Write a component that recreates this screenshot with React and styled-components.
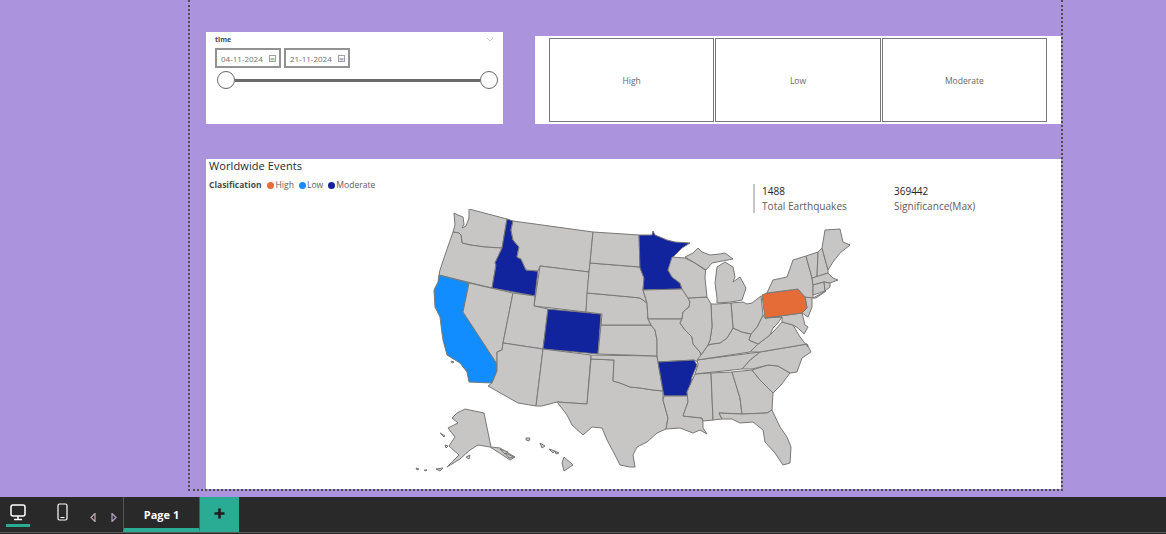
import styled, { createGlobalStyle } from "styled-components";

const Global = createGlobalStyle`
  html, body { margin: 0; padding: 0; background: #ab94dd; }
  body { font-family: "Open Sans", "Noto Sans", sans-serif; overflow: hidden; }
`;

const Page = styled.div`
  width: 1166px;
  height: 534px;
  display: flex;
  flex-direction: column;
`;

const Stage = styled.main`
  height: 497px;
  padding-left: 188px;
  box-sizing: border-box;
  background: #ab94dd;
`;

const Canvas = styled.div`
  width: 875px;
  height: 491px;
  box-sizing: border-box;
  padding: 32px 0 0 16px;
  border: 2px dotted #4d4d4d;
  border-top: none;
`;

const TopRow = styled.div`
  display: flex;
  align-items: flex-end;
  gap: 32px;
  height: 92px;
`;

const Slicer = styled.section`
  width: 297px;
  height: 92px;
  box-sizing: border-box;
  background: #fff;
  padding: 1px 9px 0 9px;
`;

const SlicerHead = styled.div`
  display: flex;
  justify-content: space-between;
  align-items: center;
  height: 13px;
  font-size: 7px;
  font-weight: 700;
  color: #3f4a63;
`;

const DateRow = styled.div`
  display: flex;
  gap: 3px;
  margin-top: 2px;
`;

const DateBox = styled.div`
  width: 66px;
  height: 20px;
  box-sizing: border-box;
  border: 2px solid #929292;
  display: flex;
  align-items: center;
  justify-content: space-between;
  padding: 0 3px 0 4px;
  font-size: 8px;
  color: #707070;
`;

const Track = styled.div`
  display: flex;
  align-items: center;
  margin: 3px -4px 0 2px;
`;

const Handle = styled.span`
  width: 18px;
  height: 18px;
  flex: none;
  box-sizing: border-box;
  border: 1.5px solid #666;
  border-radius: 50%;
  background: #fff;
`;

const Line = styled.span`
  flex: 1;
  height: 3px;
  background: #6a6a6a;
`;

const ButtonPanel = styled.section`
  width: 526px;
  height: 88px;
  box-sizing: border-box;
  background: #fff;
  padding: 2px 14px;
  display: grid;
  grid-template-columns: repeat(3, 1fr);
  gap: 1px;
`;

const LevelButton = styled.div`
  border: 1px solid #777;
  display: flex;
  align-items: center;
  justify-content: center;
  font-size: 8.5px;
  color: #666;
`;

const MapCard = styled.section`
  width: 855px;
  height: 330px;
  margin-top: 35px;
  background: #fff;
`;

const MapHeader = styled.div`
  height: 50px;
  display: flex;
  justify-content: space-between;
`;

const TitleBlock = styled.div`
  padding: 0 0 0 3px;
`;

const Title = styled.h2`
  margin: 0;
  font-size: 11px;
  line-height: 14px;
  font-weight: 400;
  color: #252a33;
  letter-spacing: 0.1px;
`;

const Legend = styled.div`
  display: flex;
  align-items: center;
  gap: 3px;
  margin-top: 6px;
  font-size: 8.6px;
  line-height: 12px;
  color: #605e5c;
`;

const LegendTitle = styled.span`
  font-size: 8.5px;
  font-weight: 700;
  margin-right: 3px;
  color: #4a4a4a;
`;

const LegendItem = styled.span`
  display: flex;
  align-items: center;
  gap: 1px;
  margin-right: 2px;
  &::before {
    content: "";
    width: 7px;
    height: 7px;
    border-radius: 50%;
    background: ${(p) => p.$color};
  }
`;

const Kpis = styled.div`
  display: grid;
  grid-template-columns: 132px 124px;
  width: 308px;
  height: 29px;
  margin-top: 25px;
  box-sizing: border-box;
  border-left: 2px solid #c8c6c4;
  padding-left: 7px;
  font-size: 10px;
  line-height: 14.5px;
`;

const KpiValue = styled.div`
  color: #252423;
`;

const KpiLabel = styled.div`
  color: #605e5c;
  font-size: 10.1px;
`;

const MapSvg = styled.svg`
  display: block;
  width: 855px;
  height: 280px;
`;

const Taskbar = styled.nav`
  height: 36px;
  box-sizing: border-box;
  background: #292929;
  border-bottom: 1px solid #5a5a5a;
  box-shadow: 0 1px 0 #292929;
  display: flex;
  align-items: stretch;
`;

const ViewButton = styled.div`
  width: ${(p) => p.$w}px;
  margin-left: ${(p) => p.$ml || 0}px;
  display: flex;
  align-items: center;
  justify-content: center;
  position: relative;
  padding-bottom: 5px;
  &::after {
    content: "";
    display: ${(p) => (p.$active ? "block" : "none")};
    position: absolute;
    left: 0;
    right: 0;
    bottom: 5px;
    height: 3px;
    background: #2aab93;
  }
`;

const Arrows = styled.div`
  display: flex;
  align-items: center;
  gap: 15px;
  width: 33px;
  margin-left: 20px;
  padding-top: 6px;
`;

const PageTab = styled.div`
  width: 77px;
  box-sizing: border-box;
  padding-top: 3px;
  border-left: 1px solid #555;
  border-right: 1px solid #555;
  border-bottom: 4px solid #2aab93;
  display: flex;
  align-items: center;
  justify-content: center;
  color: #fff;
  font-size: 11px;
  font-weight: 700;
`;

const AddTab = styled.div`
  width: 39px;
  background: #2aab93;
  display: flex;
  align-items: center;
  justify-content: center;
  padding-bottom: 2px;
`;

const DARK = "#12239e";
const BLUE = "#118dff";
const ORANGE = "#e66c37";
const GREY = "#c8c6c4";

const states = [
  ["WA", GREY, "469,209 507,219 502,248 485,247 470,245 462,243 461,235 459,233 453,232 455,225 454,213 458,215 463,217 464,224 462,228 466,226 469,218"],
  ["OR", GREY, "453,232 459,233 461,235 462,243 470,245 485,247 502,248 495,263 496,265 492,288 439,275 440,270 445,255"],
  ["CA", BLUE, "439,275 469,283 463,312 482,340 488,350 497,364 497,371 492,383 469,382 467,372 460,363 447,355 443,340 442,333 440,317 435,307 434,290 438,282"],
  ["ID", DARK, "507,219 513,221 511,230 513,240 519,247 517,257 521,259 526,270 538,271 535,296 492,288 496,265 495,263 502,248"],
  ["MT", GREY, "513,221 593,232 590,263 589,272 540,266 538,271 526,270 521,259 517,257 519,247 513,240 511,230"],
  ["WY", GREY, "540,266 589,272 586,312 534,306"],
  ["NV", GREY, "469,283 513,293 503,343 502,350 497,352 497,364 463,312"],
  ["UT", GREY, "513,293 535,296 534,306 548,309 543,349 503,343"],
  ["CO", DARK, "548,309 601,314 598,354 543,349"],
  ["AZ", GREY, "503,343 543,349 536,406 518,403 488,386 492,383 497,371 497,364 497,352 502,350"],
  ["NM", GREY, "543,349 591,355 587,404 557,402 542,406 536,406"],
  ["TX", GREY, "591,359 614,360 613,381 620,383 630,387 640,388 653,390 663,391 663,400 668,418 666,429 657,433 647,442 637,447 633,455 635,467 630,467 620,465 615,455 607,440 602,428 592,427 583,435 572,425 567,415 557,402 587,404"],
  ["OK", GREY, "591,355 657,356 658,362 663,391 653,390 640,388 630,387 620,383 613,381 614,360 591,359"],
  ["KS", GREY, "601,325 651,325 655,330 657,340 657,356 598,354"],
  ["NE", GREY, "587,293 631,297 640,298 647,303 648,319 651,325 601,325 602,314 586,312"],
  ["SD", GREY, "590,263 640,267 644,278 643,290 647,303 640,298 631,297 587,293 589,272"],
  ["ND", GREY, "593,232 639,235 640,267 590,263"],
  ["MN", DARK, "639,235 652,235 653,231 655,235 667,240 675,242 690,243 682,248 673,257 668,270 672,277 680,283 682,289 643,290 644,278 640,268"],
  ["IA", GREY, "643,290 682,289 688,298 690,302 689,307 683,312 682,319 648,319 647,303"],
  ["MO", GREY, "648,319 682,319 680,323 685,330 692,337 693,344 700,352 701,355 698,362 694,360 658,362 657,356 657,340 655,330 651,325"],
  ["AR", DARK, "658,362 694,360 697,365 692,377 691,383 687,392 688,396 664,396 663,391"],
  ["LA", GREY, "664,396 688,396 688,402 683,416 702,418 703,423 703,428 707,434 700,430 693,433 680,428 666,429 668,418 663,400"],
  ["MS", GREY, "695,374 711,373 713,420 703,421 702,418 683,416 688,402 687,392 691,383"],
  ["AL", GREY, "711,373 732,372 740,398 742,414 719,413 722,419 713,420"],
  ["GA", GREY, "732,372 752,370 760,380 773,393 772,410 767,413 742,414 740,398"],
  ["FL", GREY, "719,413 742,414 767,413 772,410 780,427 787,437 791,447 790,463 783,465 775,453 765,442 763,430 753,422 740,423 732,419 722,419"],
  ["SC", GREY, "752,370 768,365 778,366 790,373 781,385 773,393 760,380"],
  ["NC", GREY, "760,352 807,344 811,352 802,358 797,372 790,373 778,366 768,365 752,369 742,369 750,360"],
  ["TN", GREY, "697,360 760,352 750,360 742,369 695,374 698,365"],
  ["KY", GREY, "701,355 708,345 712,344 720,343 727,338 733,328 742,332 751,334 749,340 758,344 750,352 697,360"],
  ["VA", GREY, "750,352 758,344 770,335 775,330 782,322 793,325 800,337 808,347 807,344 760,352"],
  ["WV", GREY, "763,315 765,318 777,317 782,317 778,323 773,328 770,335 758,344 749,340 751,334 757,327"],
  ["OH", GREY, "731,303 743,302 747,304 752,303 761,296 763,315 757,327 751,334 742,332 733,328"],
  ["IN", GREY, "711,304 717,304 731,303 733,328 727,338 720,343 712,344 708,345 710,340 712,327"],
  ["IL", GREY, "688,298 707,297 711,304 712,327 710,340 708,345 701,355 700,352 693,344 692,337 685,330 680,323 682,319 683,312 689,307 690,302"],
  ["WI", GREY, "672,257 685,258 695,263 705,270 706,265 705,278 707,297 688,298 682,289 680,283 672,277 668,270"],
  ["MIU", GREY, "685,257 693,253 698,248 702,252 710,255 720,254 725,253 733,259 722,261 712,263 706,270 703,268 695,263"],
  ["MIL", GREY, "717,303 731,302 742,300 746,288 740,277 733,282 735,277 733,267 725,262 717,267 715,283 717,298"],
  ["MD", GREY, "765,318 802,313 805,325 808,327 804,334 798,328 793,325 782,322 782,317"],
  ["NJ", GREY, "805,297 812,296 812,307 808,317 802,313 807,308"],
  ["PA", ORANGE, "762,295 767,293 798,289 805,297 807,308 802,313 765,318"],
  ["NY", GREY, "767,293 773,280 787,277 793,260 806,256 812,278 813,285 813,295 813,298 805,297 798,289"],
  ["LI", GREY, "813,298 826,291 816,298"],
  ["VT", GREY, "806,256 818,252 817,277 812,278"],
  ["NH", GREY, "818,252 822,248 828,270 828,273 817,277"],
  ["ME", GREY, "825,230 840,229 843,242 850,245 840,253 833,262 828,270 822,248"],
  ["MA", GREY, "813,285 812,278 828,273 833,278 838,280 830,283 824,282"],
  ["CT", GREY, "813,285 824,282 825,291 813,295"],
  ["RI", GREY, "824,282 830,283 830,287 825,291"],
  ["AK", GREY, "465,409 484,413 491,447 500,448 515,457 510,460 498,452 490,447 478,445 470,450 460,459 447,467 459,455 449,446 451,443 455,437 448,428 458,423 452,418 457,413"],
  ["KOD", GREY, "466,457 470,455 469,459"],
  ["PAN1", GREY, "500,449 508,452 505,454"],
  ["PAN2", GREY, "505,453 514,457 509,458"],
  ["HI", GREY, "564,457 573,465 564,471 562,463"],
  ["HI2", GREY, "526,438 530,438 529,441 526,440"],
  ["HI3", GREY, "540,443 545,446 542,448"],
  ["HI4", GREY, "549,449 555,451 553,453"],
  ["HI5", GREY, "555,451 559,453 556,454"],
  ["AK2", GREY, "440,433 445,436 444,437"],
  ["AK3", GREY, "445,445 448,446 446,448"],
  ["AK4", GREY, "436,469 443,468 440,471"],
  ["AK5", GREY, "416,468 419,469 417,470"],
  ["AK6", GREY, "424,470 427,470 425,471"],
  ["CH", GREY, "451,361 454,362 452,363"],
];

const CalendarIcon = ({ tint }) => (
  <svg width="7" height="7" viewBox="0 0 7 7">
    <rect x="0.5" y="0.5" width="6" height="6" fill="none" stroke="#a0a0a0" />
    <rect x="1.5" y="3" width="4" height="2.5" fill={tint} />
  </svg>
);

const Triangle = ({ dir }) => (
  <svg width="6" height="9" viewBox="0 0 6 9">
    <path
      d={dir === "left" ? "M5 0.5L1 4.5L5 8.5Z" : "M1 0.5L5 4.5L1 8.5Z"}
      fill="none"
      stroke={dir === "left" ? "#c0a8b0" : "#b8a0c8"}
      strokeWidth="1.2"
    />
  </svg>
);

const App = () => {
  return (
    <Page>
      <Global />
      <Stage>
        <Canvas>
          <TopRow>
            <Slicer>
              <SlicerHead>
                <span>time</span>
                <svg width="8" height="5" viewBox="0 0 8 5">
                  <path d="M1 1L4 4L7 1" fill="none" stroke="#e0c8b8" />
                </svg>
              </SlicerHead>
              <DateRow>
                <DateBox>
                  04-11-2024 <CalendarIcon tint="#a9c4a0" />
                </DateBox>
                <DateBox>
                  21-11-2024 <CalendarIcon tint="#b8b0d0" />
                </DateBox>
              </DateRow>
              <Track>
                <Handle />
                <Line />
                <Handle />
              </Track>
            </Slicer>
            <ButtonPanel>
              <LevelButton>High</LevelButton>
              <LevelButton>Low</LevelButton>
              <LevelButton>Moderate</LevelButton>
            </ButtonPanel>
          </TopRow>
          <MapCard>
            <MapHeader>
              <TitleBlock>
                <Title>Worldwide Events</Title>
                <Legend>
                  <LegendTitle>Clasification</LegendTitle>
                  <LegendItem $color={ORANGE}>High</LegendItem>
                  <LegendItem $color={BLUE}>Low</LegendItem>
                  <LegendItem $color={DARK}>Moderate</LegendItem>
                </Legend>
              </TitleBlock>
              <Kpis>
                <KpiValue>1488</KpiValue>
                <KpiValue>369442</KpiValue>
                <KpiLabel>Total Earthquakes</KpiLabel>
                <KpiLabel>Significance(Max)</KpiLabel>
              </Kpis>
            </MapHeader>
            <MapSvg viewBox="206 209 855 280">
              {states.map(([id, fill, pts]) => (
                <polygon
                  key={id}
                  points={pts}
                  fill={fill}
                  stroke="#787878"
                  strokeWidth="1"
                  strokeLinejoin="round"
                />
              ))}
            </MapSvg>
          </MapCard>
        </Canvas>
      </Stage>
      <Taskbar>
        <ViewButton $w={24} $ml={6} $active>
          <svg width="16" height="17" viewBox="0 0 16 17">
            <rect x="1" y="1" width="14" height="11" rx="2" fill="none" stroke="#fff" strokeWidth="1.5" />
            <path d="M4 15.5H12M8 12V15.5" stroke="#fff" strokeWidth="1.5" />
          </svg>
        </ViewButton>
        <ViewButton $w={16} $ml={24}>
          <svg width="11" height="18" viewBox="0 0 11 18">
            <rect x="1" y="1" width="9" height="16" rx="1.5" fill="none" stroke="#fff" strokeWidth="1.2" />
            <path d="M3.5 14.5H7.5" stroke="#fff" />
          </svg>
        </ViewButton>
        <Arrows>
          <Triangle dir="left" />
          <Triangle dir="right" />
        </Arrows>
        <PageTab>Page 1</PageTab>
        <AddTab>
          <svg width="11" height="11" viewBox="0 0 11 11">
            <path d="M5.5 0.5V10.5M0.5 5.5H10.5" stroke="#1f1f1f" strokeWidth="2.6" />
          </svg>
        </AddTab>
      </Taskbar>
    </Page>
  );
};

export default App;
